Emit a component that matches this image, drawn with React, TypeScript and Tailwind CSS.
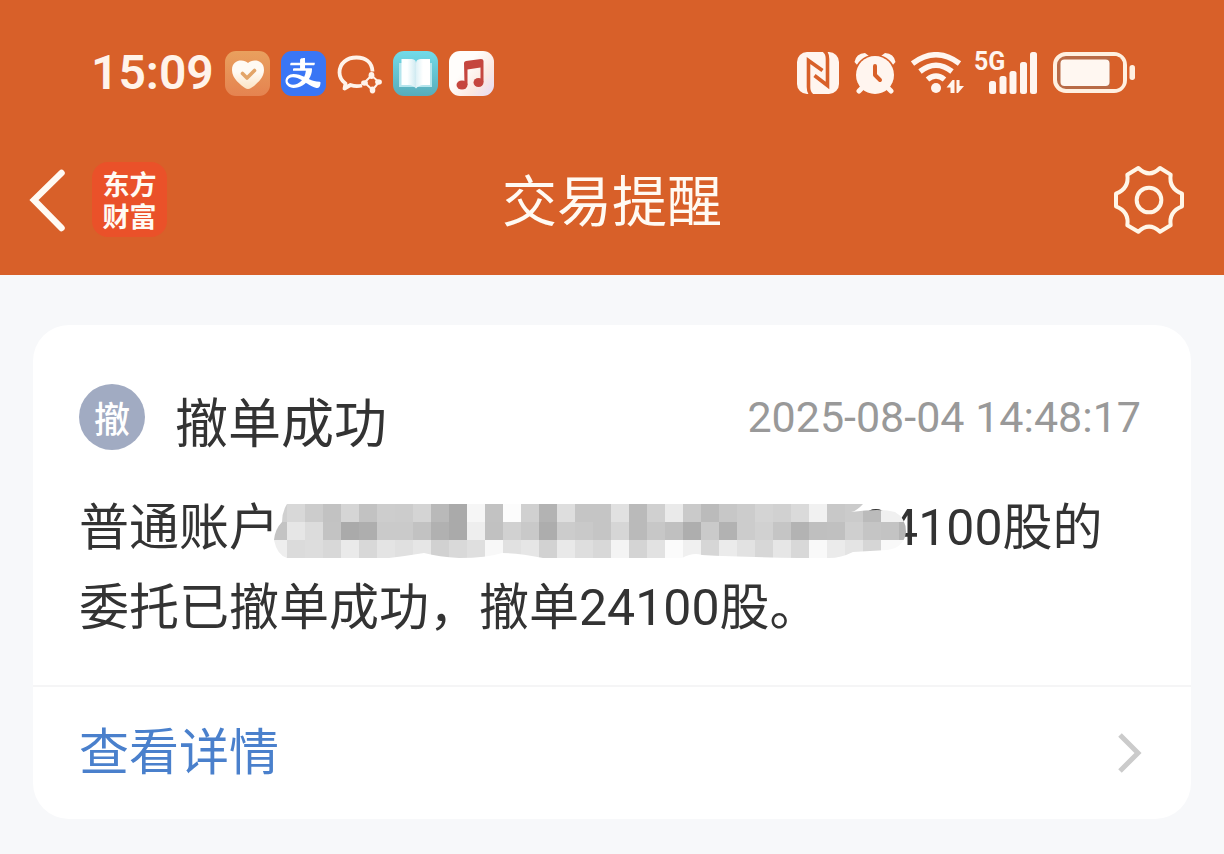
import { AiOutlineAlipay } from "react-icons/ai";

const CELL = 18;

// Grey level of every mosaic cell, row by row
const MOSAIC = [
    "d0 d8 cc c2 d5 c2 cd cc d4 b9 aa f6 c2 fc d0 b3 de c5 c5 e1 ba d0 ea ca bb c7 cc d4 d1 da f1 c8 cb bb f0 f0",
    "c3 e6 dc c3 aa ae ca ca c2 b1 aa ee c1 d1 c9 ad cc c9 c5 d6 ba c7 c0 ae ca b2 cc d1 c5 b3 bf c0 cf c5 c3 b5",
    "ee db dd d8 ea d8 e4 e0 e6 d1 d9 df f8 e1 e6 d2 e9 de d8 f4 d4 e2 fb f0 d6 eb e2 d7 e6 d8 f9 eb e4 d6 f9 f9",
].map((row) => row.split(" "));

function Mosaic() {
    return (
        <svg width="648" height="54" viewBox="0 0 648 54" className="absolute -left-2.5 top-4 z-10" aria-hidden="true">
            <clipPath id="smear">
                <path d="M18 0H594Q588 7 582 8Q612 4 626 8Q637 14 637 28Q635 44 618 46L584 48Q572 54 560 54L530 54Q470 53 433 51Q424 48 413 54H274Q250 49 233 49Q218 54 190 54Q170 53 155 49Q137 52 120 54H18Q8 51 5 36Q6 25 13 18Q13 8 18 0Z" />
            </clipPath>
            <g clipPath="url(#smear)" shapeRendering="crispEdges">
                {MOSAIC.map((row, y) =>
                    row.map((shade, x) => (
                        <rect key={`${x}-${y}`} x={x * CELL} y={y * CELL} width={CELL} height={CELL} fill={`#${shade}${shade}${shade}`} />
                    ))
                )}
            </g>
        </svg>
    );
}

function HealthIcon() {
    return (
        <svg width="45" height="45" viewBox="0 0 45 45" aria-hidden="true">
            <defs>
                <linearGradient id="health" x1="0" y1="0" x2="0" y2="1">
                    <stop offset="0" stopColor="#e9a05e" />
                    <stop offset="1" stopColor="#e58350" />
                </linearGradient>
                <linearGradient id="heart" x1="0" y1="0" x2="0" y2="1">
                    <stop offset="0.4" stopColor="#fffaf3" />
                    <stop offset="1" stopColor="#fbe3c4" />
                </linearGradient>
            </defs>
            <rect width="45" height="45" rx="11" fill="url(#health)" />
            <path d="M23 12C19 8 7 8 7 19C7 28 16 34 20 37Q23 39 26 37C30 34 39 28 39 19C39 8 27 8 23 12Z" fill="url(#heart)" />
            <path d="M17.5 22.5L22 27L29.5 19.5" fill="none" stroke="#e3a568" strokeWidth="3.6" strokeLinecap="round" strokeLinejoin="round" />
        </svg>
    );
}

function ChatIcon() {
    return (
        <svg width="45" height="45" viewBox="0 0 45 45" aria-hidden="true">
            <path d="M35.5 20.500C35 11 28.500 6.500 19.500 6.500C10 6.500 2.500 12 2.500 21.500C2.500 26.500 5 30 8.500 32.500L7.500 37.500L13.500 34Q19 36 25 34.500" fill="none" stroke="#fff3ea" strokeWidth="3.800" strokeLinejoin="round" />
            <path d="M34.500 24.500L27.500 31.500L35.500 39L42 31Z" fill="none" stroke="#fff3ea" strokeWidth="2" />
            <g fill="#fff3ea">
                <ellipse cx="34.500" cy="24.500" rx="2.900" ry="3.400" />
                <ellipse cx="27.500" cy="32" rx="3.400" ry="2.700" />
                <ellipse cx="35.500" cy="39" rx="2.800" ry="3.400" />
                <ellipse cx="41.500" cy="31" rx="3.400" ry="2.700" />
            </g>
        </svg>
    );
}

function BookIcon() {
    return (
        <svg width="45" height="45" viewBox="0 0 45 45" aria-hidden="true">
            <defs>
                <linearGradient id="cover" x1="0" y1="0" x2="0" y2="1">
                    <stop offset="0" stopColor="#72dbe9" />
                    <stop offset="1" stopColor="#58acba" />
                </linearGradient>
                <linearGradient id="pageLeft">
                    <stop offset="0.4" stopColor="#fdffff" />
                    <stop offset="1" stopColor="#cfeaf1" />
                </linearGradient>
                <linearGradient id="pageRight">
                    <stop offset="0" stopColor="#ddf1f6" />
                    <stop offset="0.5" stopColor="#ffffff" />
                </linearGradient>
            </defs>
            <rect width="45" height="45" rx="11" fill="url(#cover)" />
            <path d="M6 12H39V36H6Z" fill="#b5e5ed" />
            <path d="M8.500 8H19Q23 8.500 23 12V37.500Q20 34 16 34H8.500Z" fill="url(#pageLeft)" />
            <path d="M37 8H27.500Q23 8.500 23 12V37.500Q26 34 30 34H37Z" fill="url(#pageRight)" />
        </svg>
    );
}

function MusicIcon() {
    return (
        <svg width="45" height="45" viewBox="0 0 45 45" aria-hidden="true">
            <defs>
                <linearGradient id="music" x1="0" y1="0.2" x2="1" y2="1">
                    <stop offset="0.3" stopColor="#fffdfb" />
                    <stop offset="0.65" stopColor="#fbe9e2" />
                    <stop offset="1" stopColor="#e5daf4" />
                </linearGradient>
            </defs>
            <rect width="45" height="45" rx="11" fill="url(#music)" />
            <path d="M15 12Q15 10.500 17 10L32 8Q34.500 8 34.500 10V31H31.500V16.500L18.500 18.500V34H15.500Z" fill="#c5463f" />
            <ellipse cx="13" cy="34" rx="5.500" ry="4.500" fill="#c5463f" />
            <ellipse cx="29.500" cy="31.500" rx="5" ry="4.500" fill="#c5463f" />
        </svg>
    );
}

function NfcIcon() {
    return (
        <svg width="42" height="42" viewBox="0 0 42 42" aria-hidden="true">
            <rect width="42" height="42" rx="10" fill="#fff5ef" />
            <g fill="none" stroke="#d86029" strokeWidth="3.600">
                <path d="M15 43Q11.500 41 11.500 35V8.500L25.500 18.500" />
                <path d="M27 -1Q30.500 1 30.500 7V33.500L17.500 23.500" />
            </g>
        </svg>
    );
}

function AlarmIcon() {
    return (
        <svg width="42" height="42" viewBox="0 0 42 42" aria-hidden="true">
            <path d="M0.500 10Q2 1.500 11 1L15 4L4 14ZM41.500 10Q40 1.500 31 1L27 4L38 14Z" fill="#fff5ef" />
            <path d="M9 35L5 39M33 35L37 39" stroke="#fff5ef" strokeWidth="5" strokeLinecap="round" />
            <path d="M3 16A19.500 19.500 0 0 1 39 16" fill="none" stroke="#d86029" strokeWidth="3" />
            <circle cx="21" cy="23" r="19" fill="#fff5ef" />
            <path d="M21 14V23L26 28" fill="none" stroke="#d86029" strokeWidth="4" strokeLinecap="round" strokeLinejoin="round" />
        </svg>
    );
}

function WifiIcon() {
    return (
        <svg width="53" height="42" viewBox="0 0 53 42" aria-hidden="true">
            <g fill="none" stroke="#fff5ef" strokeWidth="5.500">
                <path d="M1.500 11.500Q25 -6 48.500 11.500" />
                <path d="M9 19.500Q25 7 41 19.500" />
                <path d="M16.500 27.500Q25 20.500 33.500 27.500" />
            </g>
            <circle cx="25" cy="36" r="5" fill="#fff5ef" />
            <path d="M35.500 35.500L41.500 28H43.500V41H39.500V35.500ZM45.500 28H48.500V34H53L47 41H45.500Z" fill="#fff5ef" />
        </svg>
    );
}

function SignalIcon() {
    return (
        <svg width="63" height="44" viewBox="0 0 63 44" className="-ml-1 overflow-visible" role="img" aria-label="5G">
            <text x="-1" y="19" fill="#fff5ef" fontSize="25" fontWeight="700" fontFamily="'Liberation Sans Narrow', Roboto, sans-serif">
                5G
            </text>
            <g fill="#fff5ef">
                <rect x="14" y="30" width="7" height="13" rx="2.500" />
                <rect x="24.500" y="25" width="7" height="18" rx="2.500" />
                <rect x="34.500" y="20" width="7" height="23" rx="2.500" />
                <rect x="45" y="11" width="7" height="32" rx="2.500" />
                <rect x="55" y="1" width="7" height="42" rx="2.500" />
            </g>
        </svg>
    );
}

function BatteryIcon() {
    return (
        <svg width="83" height="42" viewBox="0 0 83 42" aria-hidden="true">
            <rect x="2" y="2" width="70" height="37" rx="11" fill="#b86b47" stroke="#fff0e0" strokeWidth="4" />
            <path d="M57 4H63Q70 6 70 13V28Q70 36 63 37H57Z" fill="#d86029" />
            <rect x="7.500" y="7.500" width="49" height="26.500" rx="4" fill="#fff7f1" />
            <rect x="76.500" y="13" width="5.500" height="15" rx="2.700" fill="#fff0e0" />
        </svg>
    );
}

function StatusBar() {
    return (
        <div className="flex h-[146px] items-center justify-between pl-[91px] pr-[88px]">
            <div className="flex items-center gap-[11px]">
                <span className="text-[48px] leading-none font-semibold text-[#fff3ea]">15:09</span>
                <HealthIcon />
                <span className="flex size-[45px] items-center justify-center rounded-[11px] bg-[#3a76f5]">
                    <AiOutlineAlipay size={40} color="#fff" aria-hidden="true" />
                </span>
                <ChatIcon />
                <BookIcon />
                <MusicIcon />
            </div>
            <div className="flex items-center gap-[15px]">
                <NfcIcon />
                <AlarmIcon />
                <WifiIcon />
                <SignalIcon />
                <BatteryIcon />
            </div>
        </div>
    );
}

function TitleBar() {
    return (
        <div className="grid grid-cols-[1fr_auto_1fr] items-center px-7 pt-3 pb-[34px]">
            <div className="flex items-center gap-6">
                <button type="button" aria-label="返回">
                    <svg width="40" height="64" viewBox="0 0 40 64" fill="none" stroke="#fffaf3" strokeWidth="6.500" strokeLinecap="round">
                        <path d="M33.500 5L6 32L33.500 60" />
                    </svg>
                </button>
                <div className="flex h-[75px] w-[75px] flex-col items-center justify-center rounded-2xl bg-[#ea5129] font-['Noto_Sans_CJK_SC',sans-serif] text-[27px] leading-8 font-bold text-[#fffaf3]">
                    <span>东方</span>
                    <span>财富</span>
                </div>
            </div>
            <h1 className="pt-1.5 text-[55px] leading-[77px] text-[#fffaf3]">交易提醒</h1>
            <button type="button" aria-label="设置" className="mr-3 justify-self-end">
                <svg width="70" height="70" viewBox="72 41 210 210" fill="none" stroke="#fff6e8" strokeWidth="12" strokeLinejoin="round">
                    <path d="M145 50Q178 82 210 50L242 70Q236 111 276 127V165Q236 181 242 222L210 241Q177 211 145 241L112 222Q118 181 78 165V127Q118 111 112 70Z" />
                    <circle cx="177" cy="146" r="37" />
                </svg>
            </button>
        </div>
    );
}

export default function App() {
    return (
        <div className="min-h-screen bg-[#f7f8fa] font-[Roboto,'Noto_Sans_CJK_SC',sans-serif]">
            <header className="bg-[#d86029]">
                <StatusBar />
                <TitleBar />
            </header>

            <main className="px-[33px] pt-[50px] pb-9">
                <article className="rounded-[36px] bg-white">
                    <div className="px-[46px] pt-[49px] pb-[37px]">
                        <div className="flex items-center">
                            <span className="flex size-[66px] items-center justify-center rounded-full bg-[#a1abc2] font-['Noto_Sans_CJK_SC',sans-serif] text-[36px] leading-none font-medium text-white">
                                撤
                            </span>
                            <h2 className="ml-[30px] pt-1.5 font-['Noto_Sans_CJK_SC',sans-serif] text-[53px] leading-[80px] text-[#333333]">撤单成功</h2>
                            <time className="ml-auto pr-1 text-[43px] leading-[80px] text-[#999999]">2025-08-04 14:48:17</time>
                        </div>
                        <p className="mt-7 text-[50px] leading-[80px] text-[#333333]">
                            普通账户
                            <span className="relative inline-block h-[80px] w-[583px] align-top">
                                <Mosaic />
                            </span>
                            24100股的委托已撤单成功，撤单24100股。
                        </p>
                    </div>
                    <a href="#detail" className="flex items-center justify-between border-t-2 border-[#f5f5f6] px-[46px] py-[26px] text-[50px] leading-[80px] text-[#4a80cc]">
                        查看详情
                        <svg width="28" height="42" viewBox="0 0 28 42" fill="none" stroke="#cbcbcb" strokeWidth="5" aria-hidden="true">
                            <path d="M3 3L21 21L3 39" />
                        </svg>
                    </a>
                </article>
            </main>
        </div>
    );
}
